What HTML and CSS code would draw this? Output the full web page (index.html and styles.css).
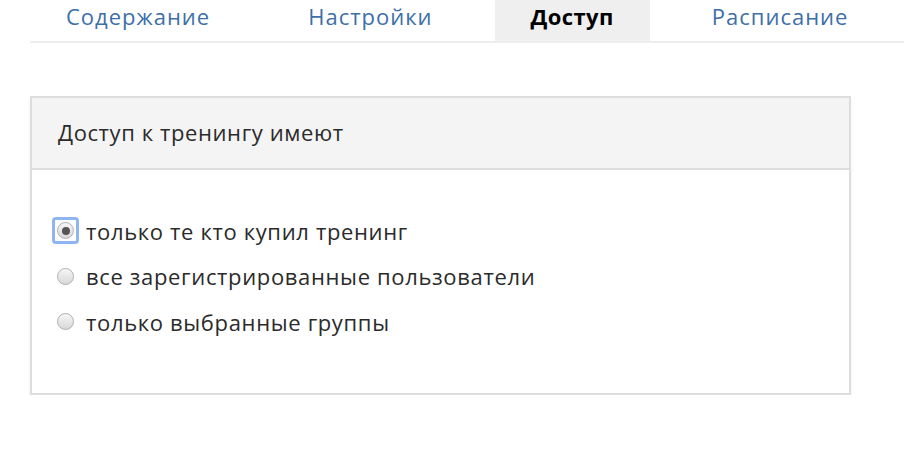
FILE: index.html
```html
<!DOCTYPE html>
<html lang="ru">
<head>
<meta charset="utf-8">
<link rel="stylesheet" href="styles.css">
</head>
<body>
<nav class="tabs">
  <a class="tab">Содержание</a>
  <a class="tab">Настройки</a>
  <a class="tab active">Доступ</a>
  <a class="tab">Расписание</a>
</nav>
<section class="panel">
  <div class="panel-head">Доступ к тренингу имеют</div>
  <div class="panel-body">
    <label class="opt"><span class="radio checked focus"></span>только те кто купил тренинг</label>
    <label class="opt"><span class="radio"></span>все зарегистрированные пользователи</label>
    <label class="opt"><span class="radio"></span>только выбранные группы</label>
  </div>
</section>
</body>
</html>
```
FILE: styles.css
```css
body {
  margin: 0;
  font-family: "Open Sans", "Liberation Sans", sans-serif;
  color: #333;
  background: #fff;
}
.tabs {
  display: flex;
  margin-left: 30px;
  height: 41px;
  border-bottom: 2px solid #eeeeee;
}
.tab {
  padding: 0 36px;
  margin-right: 26px;
  font-size: 22px;
  letter-spacing: 1px;
  line-height: 33px;
  color: #3d6fa8;
}
.tab.active {
  background: #efefef;
  color: #000;
  font-weight: 700;
  letter-spacing: 0.4px;
}
.panel {
  margin: 53px 0 0 30px;
  width: 817px;
  border: 2px solid #dddddd;
  box-shadow: 0 3px 4px rgba(0,0,0,0.06);
}
.panel-head {
  height: 70px;
  padding-left: 26px;
  background: #f4f4f4;
  border-bottom: 2px solid #dddddd;
  font-size: 22px;
  letter-spacing: 0.6px;
  line-height: 68px;
  color: #2b2b2b;
}
.panel-body {
  height: 223px;
  padding: 38px 0 0 25px;
  box-sizing: border-box;
  display: flex;
  flex-direction: column;
}
.opt {
  display: flex;
  align-items: center;
  height: 45.5px;
  font-size: 22px;
  letter-spacing: 0.65px;
  color: #2b2b2b;
}
.radio {
  position: relative;
  width: 17px;
  height: 17px;
  margin-right: 12px;
  border-radius: 50%;
  box-sizing: border-box;
  border: 1px solid #b0b0b0;
  background: linear-gradient(#f6f6f6, #d8d8d8);
  flex: none;
}
.radio.checked::after {
  content: "";
  position: absolute;
  left: 3.5px;
  top: 3.5px;
  width: 8px;
  height: 8px;
  border-radius: 50%;
  background: #555;
}
.radio.focus::before {
  content: "";
  position: absolute;
  left: -6px;
  top: -6px;
  width: 27px;
  height: 27px;
  border: 3px solid #8db6f2;
  border-radius: 4px;
  box-sizing: border-box;
}
```
